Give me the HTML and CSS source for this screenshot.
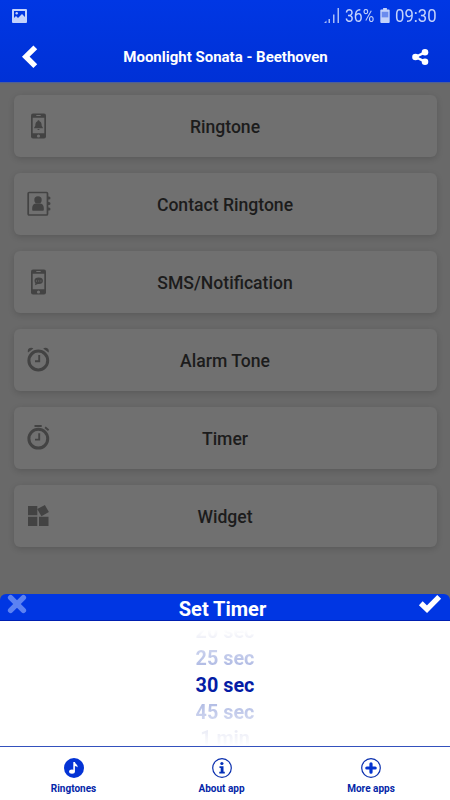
FILE: index.html
```html
<!DOCTYPE html>
<html lang="en">
<head>
<meta charset="utf-8">
<title>Moonlight Sonata - Beethoven</title>
<link rel="stylesheet" href="styles.css">
</head>
<body>
<div class="screen">
  <header class="header">
    <div class="status">
      <svg class="picture" width="15" height="14" viewBox="0 0 15 14"><path fill="#c3d2fb" fill-rule="evenodd" d="M1 0h13a1 1 0 0 1 1 1v12a1 1 0 0 1-1 1H1a1 1 0 0 1-1-1V1a1 1 0 0 1 1-1zM2 2v7l2-2 2 2 4-4 3 3V2z"/><circle cx="4.7" cy="4.3" r="1.2" fill="#c3d2fb"/></svg>
      <div class="status-right">
        <svg class="signal" width="16" height="15" viewBox="0 0 16 15" fill="#a9bdf6"><path d="M0 15l2.5-2.5V15zM4.500 11H6v4H4.500zM9 6.500h1.500V15H9zM13.500 0H15v15h-1.500z"/></svg>
        <span class="battery-text"><span>36%</span></span>
        <svg class="battery" width="10" height="15" viewBox="0 0 10 16"><path fill="#c3d2fb" d="M3 0h4v1.500h2a1 1 0 0 1 1 1V15a1 1 0 0 1-1 1H1a1 1 0 0 1-1-1V2.500a1 1 0 0 1 1-1h2z"/><path fill="#6b8bed" d="M1.500 4h7v6h-7z"/></svg>
        <span class="clock"><span>09:30</span></span>
      </div>
    </div>
    <div class="titlebar">
      <svg class="back" width="18" height="24" viewBox="0 0 18 24"><path d="M14.300 2.300 4.800 11.700 14.300 21.200" fill="none" stroke="#fff" stroke-width="5.400"/></svg>
      <h1>Moonlight Sonata - Beethoven</h1>
      <svg class="share" width="17" height="16" viewBox="0 0 17 16"><g fill="#fff"><circle cx="3.500" cy="8" r="3.300"/><circle cx="13" cy="3.300" r="3.300"/><circle cx="13" cy="12.700" r="3.300"/></g><path d="M13 3.300 3.500 8l9.500 4.700" fill="none" stroke="#fff" stroke-width="2.400"/></svg>
    </div>
  </header>

  <main class="list">
    <div class="card">
      <svg class="icon" viewBox="0 0 26 26"><rect x="5" y=".5" width="15" height="25" rx="2"/><path class="hole" d="M6.700 4.700h11.600v15.600H6.700zM10.300 2h4.400v1h-4.400z"/><circle class="hole" cx="12.500" cy="23" r="1.600"/><path d="M12.500 7.200c.7 0 1 .5 1 1 2 .7 2 2.300 2.200 4.600l1.200 1.900v.6H8.100v-.6l1.200-1.900c.2-2.300.2-3.900 2.200-4.600 0-.5.300-1 1-1zM11.300 16h2.400c-.3 1.300-2.100 1.300-2.400 0z"/></svg>
      <span>Ringtone</span>
    </div>
    <div class="card">
      <svg class="icon" viewBox="0 0 26 26"><rect class="line" x="2.200" y="1.500" width="19.300" height="22.500" rx="1"/><circle cx="12" cy="9" r="3.700"/><path d="M6.200 19v-2.200c0-3 2-4.400 4-4.400.9.700 2.700.7 3.600 0 2 0 4 1.400 4 4.400V19q0 .8-.8.800H7q-.8 0-.8-.8zM22 5.500h1a1.300 1.300 0 0 1 0 3h-1zM22 11h1a1.300 1.300 0 0 1 0 3h-1zM22 16.500h1a1.300 1.300 0 0 1 0 3h-1z"/></svg>
      <span>Contact Ringtone</span>
    </div>
    <div class="card">
      <svg class="icon" viewBox="0 0 26 26"><rect x="5" y=".5" width="15" height="25" rx="2"/><path class="hole" d="M6.700 4.700h11.600v15.600H6.700zM10.300 2h4.400v1h-4.400z"/><circle class="hole" cx="12.500" cy="23" r="1.600"/><ellipse cx="12.700" cy="11.800" rx="4.200" ry="3.300"/><path d="m9.700 13-.7 3.200 4.500-2z"/><path class="hole" d="M10 11.500h1v1h-1zm2.200 0h1v1h-1zm2.200 0h1v1h-1z"/></svg>
      <span>SMS/Notification</span>
    </div>
    <div class="card">
      <svg class="icon" viewBox="0 0 26 26"><circle class="ring" cx="12.300" cy="13.500" r="9.400"/><path class="hand" d="M13.200 8v6.300H9"/><path d="M2 5.500C.8 1.500 4.800-.2 7.400 1.500zM22.600 5.500C23.800 1.500 19.800-.2 17.200 1.500z"/></svg>
      <span>Alarm Tone</span>
    </div>
    <div class="card">
      <svg class="icon" viewBox="0 0 26 26"><circle class="ring" cx="12.300" cy="13.700" r="9.400"/><path class="hand" d="M13.200 8.300v6.300H9M8.500 1h7.200M19.100 2.200l3.500 3"/></svg>
      <span>Timer</span>
    </div>
    <div class="card">
      <svg class="icon" viewBox="0 0 26 26"><path d="M2 3h9.300v9.200H2zM2 13.800h9.300V23H2zM13 13.800h9.500V23H13z"/><path d="m11.200 6.100 7.700-4 4 7-7.500 4.200z"/></svg>
      <span>Widget</span>
    </div>
  </main>

  <section class="sheet">
    <div class="sheet-head">
      <svg class="cancel" width="20" height="20" viewBox="0 0 20 20"><path d="m3.600 3.600 12.800 12.800m0-12.800L3.600 16.400" stroke="#5c82f2" stroke-width="5.400" stroke-linecap="round"/></svg>
      <h2>Set Timer</h2>
      <svg class="ok" width="24" height="19" viewBox="0 0 24 19"><path d="m2.800 9.200 6.200 6L21.200 2.800" fill="none" stroke="#fff" stroke-width="5.400"/></svg>
    </div>
    <div class="picker">
      <div class="wheel">
        <div class="far top">20 sec</div>
        <div class="near">25 sec</div>
        <div>30 sec</div>
        <div class="near below">45 sec</div>
        <div class="far bottom">1 min</div>
      </div>
    </div>
  </section>

  <nav class="tabs">
    <div class="tab ringtones">
      <svg width="20" height="20" viewBox="0 0 20 20"><circle cx="10" cy="10" r="10" fill="#0433d5"/><ellipse cx="8" cy="13.600" rx="2.900" ry="2.200" fill="#fff"/><path d="M9.300 4h1.600c.2 2 3 2.300 2.800 5.500-.8-1-1.700-1.400-2.800-1.500v5.600H9.300z" fill="#fff"/></svg>
      <span>Ringtones</span>
    </div>
    <div class="tab about">
      <svg width="20" height="20" viewBox="0 0 20 20"><circle cx="10" cy="10" r="9.300" fill="#fff" stroke="#0a2fae" stroke-width="1.200"/><circle cx="9.900" cy="5.500" r="1.600" fill="#0430b8"/><path d="M7.500 8.200h4v5.600h1.300v1.700H7.300v-1.700h1.400V9.900H7.500z" fill="#0430b8"/></svg>
      <span>About app</span>
    </div>
    <div class="tab more">
      <svg width="20" height="20" viewBox="0 0 20 20"><circle cx="10" cy="10" r="9.300" fill="#fff" stroke="#0a2fae" stroke-width="1.200"/><path d="M10 5.800v8.400M5.800 10h8.400" stroke="#0433d0" stroke-width="3.200" stroke-linecap="round"/></svg>
      <span>More apps</span>
    </div>
  </nav>
</div>
</body>
</html>
```
FILE: styles.css
```css
* { box-sizing: border-box; }
body { margin: 0; font-family: Roboto, "Liberation Sans", sans-serif; }
h1, h2 { margin: 0; }
svg { display: block; flex: none; }

.screen {
  width: 450px;
  height: 800px;
  overflow: hidden;
  display: flex;
  flex-direction: column;
  background: #696969;
}

.header {
  height: 82px;
  flex: none;
  background: linear-gradient(#0037e4, #0031d6);
  box-shadow: 0 1px 1px #4f5f94;
}
.status {
  height: 31px;
  display: flex;
  justify-content: space-between;
  align-items: center;
  padding: 0 13px 0 12px;
}
.status-right { display: flex; align-items: center; color: #c3d2fb; font-size: 19px; line-height: 22px; }
.signal { margin-right: 5px; }
.battery-text { width: 35px; }
.battery { margin-right: 5px; }
.clock { width: 42px; }
.battery-text span, .clock span {
  display: inline-block;
  transform: scaleX(.83);
  transform-origin: left;
}
.clock span { transform: scaleX(.88); }
.titlebar {
  height: 51px;
  display: flex;
  align-items: center;
  justify-content: space-between;
  padding: 0 21px;
}
h1 { color: #fff; font-size: 15px; font-weight: 700; line-height: 20px; }

.list {
  flex: 1;
  padding: 12.500px 13px 0 14px;
  display: flex;
  flex-direction: column;
  gap: 16.200px;
}
.card {
  height: 62px;
  flex: none;
  display: grid;
  grid-template-columns: 26px 1fr 26px;
  align-items: center;
  padding: 0 13px 0 12px;
  border-radius: 6px;
  background: #707070;
  box-shadow: 0 2px 6px rgba(0, 0, 0, .15);
  color: #1c1c1c;
  font-size: 17.600px;
  font-weight: 500;
  text-align: center;
}
.card span { padding-top: 2px; }
.icon { width: 26px; height: 26px; fill: #434343; }
.icon .hole { fill: #707070; }
.icon .line { fill: none; stroke: #434343; stroke-width: 1.700; }
.icon .hand { fill: none; stroke: #434343; stroke-width: 1.900; }
.icon .ring { fill: none; stroke: #434343; stroke-width: 3; }

.sheet { height: 152px; flex: none; }
.sheet-head {
  height: 27px;
  display: flex;
  align-items: flex-start;
  justify-content: space-between;
  padding: 0 8px 0 7px;
  border-radius: 6px 6px 0 0;
  border-bottom: 1px solid #001fb0;
  background: #0036e3;
}
h2 { color: #fff; font-size: 20px; font-weight: 700; line-height: 24px; padding-top: 3px; }
.picker { height: 125px; overflow: hidden; background: #fff; }
.wheel {
  height: 125px;
  padding-top: 2px;
  display: flex;
  flex-direction: column;
  color: #041ca5;
  font-size: 19.800px;
  font-weight: 700;
  line-height: 27px;
  text-align: center;
}
.near { color: transparent; background: linear-gradient(#d4daf1, #a6b2e0); background-clip: text; }
.near.below { background: linear-gradient(#a9b5e1, #dce1f4); background-clip: text; }
.far { flex: none; height: 22px; line-height: 18px; color: transparent; background-clip: text; }
.far.top { background: linear-gradient(#fff 30%, #e2e4f2); background-clip: text; }
.far.bottom { line-height: 26px; background: linear-gradient(#e4e6f3, #fff 90%); background-clip: text; }

.tabs {
  height: 54px;
  flex: none;
  display: grid;
  grid-template-columns: 147px 149px 150px;
  border-top: 1px solid #3451bd;
  background: #fff;
  color: #0426a8;
  font-size: 10px;
  font-weight: 700;
}
.tab { display: flex; flex-direction: column; align-items: center; padding-top: 10.500px; }
.tab span { line-height: 14px; margin-top: 4px; }
```
